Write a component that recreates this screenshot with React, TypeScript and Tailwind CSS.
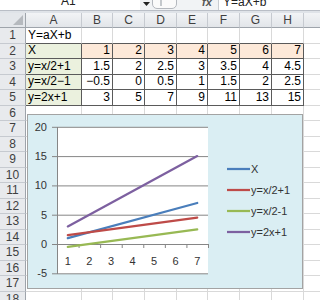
import React from "react";

const FONT = { fontFamily: '"Liberation Sans", Arial, sans-serif' };

const cols = [
  { l: "A", w: "w-[56px]" },
  { l: "B", w: "w-[31px]" },
  { l: "C", w: "w-[32px]" },
  { l: "D", w: "w-[32px]" },
  { l: "E", w: "w-[31px]" },
  { l: "F", w: "w-[32px]" },
  { l: "G", w: "w-[32px]" },
  { l: "H", w: "w-[32px]" },
];

const data: (string | number)[][] = [
  ["Y=aX+b"],
  ["X", 1, 2, 3, 4, 5, 6, 7],
  ["y=x/2+1", 1.5, 2, 2.5, 3, 3.5, 4, 4.5],
  ["y=x/2\u22121", "\u22120.5", 0, 0.5, 1, 1.5, 2, 2.5],
  ["y=2x+1", 3, 5, 7, 9, 11, 13, 15],
];

const rowHeights = [16, 15, 16, 15, 16, 15, 16, 15, 16, 15, 16, 15, 16, 15, 16, 15, 16, 15];

function Cell({ r, c }: { r: number; c: number }) {
  const inTable = r >= 2 && r <= 5;
  const val = data[r - 1]?.[c];
  let bg = "bg-white";
  if (r === 2 && c >= 1) bg = "bg-[#fde9d9]";
  if (inTable && c === 0) bg = "bg-[#ebf1de]";
  const br = inTable ? "border-r-[#5a5a5a]" : "border-r-[#d9d9d9]";
  const bb = r >= 1 && r <= 5 ? "border-b-[#5a5a5a]" : "border-b-[#d9d9d9]";
  const isNum = typeof val === "number" || (typeof val === "string" && val.startsWith("\u2212") && c > 0);
  return (
    <div
      className={`${cols[c].w} h-full shrink-0 border-r border-b ${br} ${bb} ${bg} flex items-end pb-[1px] text-[12px] leading-[13px] text-black whitespace-nowrap ${
        isNum ? "justify-end pr-[2px]" : "justify-start pl-[2px]"
      }`}
    >
      {val !== undefined ? String(val) : ""}
    </div>
  );
}

function Chart() {
  const y = (v: number) => 129 - v * 5.86;
  const cx = (i: number) => 29 + 10.8 + (i - 1) * 21.57;
  const series = [
    { name: "X", color: "#4a7ebb", f: (x: number) => x },
    { name: "y=x/2+1", color: "#be4b48", f: (x: number) => x / 2 + 1 },
    { name: "y=x/2-1", color: "#98b954", f: (x: number) => x / 2 - 1 },
    { name: "y=2x+1", color: "#7d60a0", f: (x: number) => 2 * x + 1 },
  ];
  const grid = [20, 15, 10, 5, 0, -5];
  return (
    <div className="absolute left-[27px] top-[114px] w-[276px] h-[175px] border border-[#a3a3a3] bg-[#daeef3]">
      <svg width="274" height="173" viewBox="0 0 274 173" style={FONT}>
        <rect x="29" y="12" width="151" height="147" fill="#ffffff" />
        {grid.map((g) => (
          <g key={g}>
            <line x1="24" x2="180" y1={y(g) + 0.5} y2={y(g) + 0.5} stroke="#868686" strokeWidth="1" />
            <text x="19" y={y(g) + 4} textAnchor="end" fontSize="11" fill="#333">
              {g}
            </text>
          </g>
        ))}
        <line x1="29.5" x2="29.5" y1="12" y2="159" stroke="#868686" strokeWidth="1" />
        {[0, 1, 2, 3, 4, 5, 6, 7].map((k) => (
          <line
            key={k}
            x1={29.5 + k * 21.57}
            x2={29.5 + k * 21.57}
            y1={y(0)}
            y2={y(0) + 4}
            stroke="#868686"
            strokeWidth="1"
          />
        ))}
        {[1, 2, 3, 4, 5, 6, 7].map((i) => (
          <text key={i} x={cx(i)} y="150" textAnchor="middle" fontSize="11" fill="#333">
            {i}
          </text>
        ))}
        {series.map((s) => (
          <line
            key={s.name}
            x1={cx(1)}
            y1={y(s.f(1))}
            x2={cx(7)}
            y2={y(s.f(7))}
            stroke={s.color}
            strokeWidth="2.25"
            strokeLinecap="round"
          />
        ))}
        {series.map((s, k) => (
          <g key={"l" + s.name}>
            <line x1="199" x2="222" y1={54 + k * 21} y2={54 + k * 21} stroke={s.color} strokeWidth="2.25" />
            <text x="223" y={58 + k * 21} fontSize="11" fill="#333">
              {s.name}
            </text>
          </g>
        ))}
      </svg>
    </div>
  );
}

export default function App() {
  return (
    <div className="relative w-[320px] h-[300px] overflow-hidden bg-white" style={FONT}>
      {/* formula bar */}
      <div className="flex h-[11px] overflow-hidden border-b border-[#b9bec6]">
        <div className="w-[140px] shrink-0 bg-white relative overflow-hidden">
          <span className="absolute left-[61px] top-[-6px] text-[12px] leading-[14px] text-[#222]">A1</span>
        </div>
        <div className="w-[78px] shrink-0 bg-[#f1f3f5] relative overflow-hidden">
          <svg className="absolute left-[3px] top-[2px]" width="8" height="5" viewBox="0 0 8 5">
            <path d="M0 0 L7 0 L3.5 4 Z" fill="#222" />
          </svg>
          <div className="absolute left-[12px] top-[-6px] w-[25px] h-[15px] rounded-[5px] border border-[#b4b8be] bg-[#fafafa]">
            <div className="absolute left-[7px] top-[5px] w-[2px] h-[6px] bg-[#c4c8cc]" />
          </div>
          <span className="absolute left-[62px] top-[-4px] text-[11px] leading-[13px] italic font-bold text-[#555]">fx</span>
        </div>
        <div className="flex-1 bg-white border-l border-[#c8ccd1] relative overflow-hidden">
          <span className="absolute left-[4px] top-[-5px] text-[12px] leading-[14px] text-[#222]">Y=aX+b</span>
        </div>
      </div>
      <div className="h-[2px] bg-[#dfe3e8]" />
      {/* column header */}
      <div className="flex h-[15px]">
        <div className="w-[26px] shrink-0 h-full relative bg-[#e4e7eb] border-r border-b border-[#9ea4ab]">
          <svg className="absolute right-[2px] bottom-[2px]" width="10" height="10" viewBox="0 0 10 10">
            <path d="M10 0 L10 10 L0 10 Z" fill="#b5b9be" />
          </svg>
        </div>
        {cols.map((c) => (
          <div
            key={c.l}
            className={`${c.w} shrink-0 h-full flex items-center justify-center bg-gradient-to-b from-[#f2f4f6] to-[#e2e5e9] border-r border-r-[#c6cad0] border-b border-b-[#9ea4ab] text-[12px] leading-[13px] text-[#3f3f3f]`}
          >
            {c.l}
          </div>
        ))}
        <div className="flex-1 h-full bg-gradient-to-b from-[#f2f4f6] to-[#e2e5e9] border-b border-[#9ea4ab]" />
      </div>
      {/* rows */}
      {rowHeights.map((h, idx) => {
        const r = idx + 1;
        return (
          <div key={r} className={`flex ${h === 16 ? "h-[16px]" : "h-[15px]"}`}>
            <div className="w-[26px] shrink-0 h-full flex items-center justify-center bg-[#e8eaed] border-r border-r-[#9ea4ab] border-b border-b-[#c6cad0] text-[12px] leading-[13px] text-[#3f3f3f]">
              {r}
            </div>
            {cols.map((_, c) => (
              <Cell key={c} r={r} c={c} />
            ))}
            <div className="flex-1 h-full border-b border-[#d9d9d9]" />
          </div>
        );
      })}
      <Chart />
    </div>
  );
}
